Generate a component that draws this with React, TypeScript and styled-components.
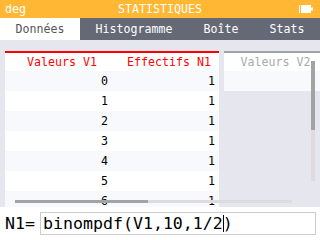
import styled, { createGlobalStyle } from 'styled-components';

const GlobalStyle = createGlobalStyle`
  html, body {
    margin: 0;
    padding: 0;
    background: #ffffff;
  }
`;

const mono = `"DejaVu Sans Mono", "Liberation Mono", monospace`;

const Screen = styled.div`
  width: 320px;
  height: 240px;
  display: flex;
  flex-direction: column;
  overflow: hidden;
  font-family: ${mono};
`;

const TitleBar = styled.div`
  height: 18px;
  background: #ffb734;
  color: #ffffff;
  display: grid;
  grid-template-columns: 1fr auto 1fr;
  align-items: center;
  padding: 0 5px;
  font-size: 11.6px;
  line-height: 18px;
`;

const TitleRight = styled.div`
  display: flex;
  justify-content: flex-end;
  align-items: center;
  padding-right: 1px;
`;

const TabBar = styled.div`
  height: 22px;
  display: flex;
  background: #656975;
`;

const Tab = styled.div<{ $active?: boolean }>`
  flex: 1 1 auto;
  display: flex;
  align-items: center;
  justify-content: center;
  font-size: 11.6px;
  background: ${(p) => (p.$active ? '#ffffff' : 'transparent')};
  color: ${(p) => (p.$active ? '#555555' : '#ffffff')};
`;

const Content = styled.div`
  position: relative;
  flex: 1;
  background: #e6e6ee;
  padding: 11px 0 0 5px;
  display: flex;
  gap: 5px;
  overflow: hidden;
`;

const Group = styled.div<{ $accent: string }>`
  display: flex;
  border-top: 2px solid ${(p) => p.$accent};
  align-self: flex-start;
`;

const Column = styled.div<{ $width: number }>`
  width: ${(p) => p.$width}px;
  flex: none;
  display: flex;
  flex-direction: column;
`;

const HeaderCell = styled.div<{ $color: string; $shift: number }>`
  height: 18px;
  background: #ffffff;
  color: ${(p) => p.$color};
  font-size: 11.6px;
  display: flex;
  align-items: center;
  justify-content: center;
  padding-left: ${(p) => p.$shift}px;
`;

const Cell = styled.div<{ $stripe: boolean }>`
  height: 20px;
  background: ${(p) => (p.$stripe ? '#f7f9fd' : '#ffffff')};
  color: #000000;
  font-size: 11.6px;
  display: flex;
  align-items: center;
  justify-content: flex-end;
  padding-right: 4px;
`;

const HScroll = styled.div`
  position: absolute;
  left: 15px;
  top: 160px;
  width: 277px;
  height: 3px;
  background: #dedadd;
`;

const VScroll = styled.div`
  position: absolute;
  left: 311px;
  top: 21px;
  width: 4px;
  height: 120px;
  background: #dedadd;
`;

const Thumb = styled.div<{ $vertical?: boolean; $size: number }>`
  background: #a3a3a3;
  width: ${(p) => (p.$vertical ? '100%' : `${p.$size}px`)};
  height: ${(p) => (p.$vertical ? `${p.$size}px` : '100%')};
`;

const EditBar = styled.div`
  height: 33px;
  flex: none;
  background: #ffffff;
  display: flex;
  align-items: center;
  padding-left: 5px;
  font-size: 16.6px;
  color: #000000;
`;

const Label = styled.span`
  width: 35px;
  flex: none;
`;

const InputBox = styled.div`
  width: 272px;
  height: 21px;
  border: 1px solid #cccccc;
  padding-left: 2px;
  display: flex;
  align-items: center;
`;

const Caret = styled.span`
  display: inline-block;
  width: 1px;
  height: 17px;
  background: #000000;
  margin: 0 -1px 0 0;
`;

const values = [0, 1, 2, 3, 4, 5, 6];

function Battery() {
  return (
    <svg width="15" height="9" viewBox="0 0 15 9">
      <rect x="0" y="0" width="1" height="8" fill="#ffffff" />
      <rect x="2" y="0" width="10" height="8" fill="#ffffff" />
      <rect x="12" y="2.5" width="2" height="3" fill="#ffffff" />
    </svg>
  );
}

export default function App() {
  return (
    <Screen>
      <GlobalStyle />
      <TitleBar>
        <span>deg</span>
        <span>STATISTIQUES</span>
        <TitleRight>
          <Battery />
        </TitleRight>
      </TitleBar>
      <TabBar>
        <Tab $active>Données</Tab>
        <Tab>Histogramme</Tab>
        <Tab>Boîte</Tab>
        <Tab>Stats</Tab>
      </TabBar>
      <Content>
        <Group $accent="#ff0000">
          <Column $width={107}>
            <HeaderCell $color="#ff0000" $shift={7}>Valeurs V1</HeaderCell>
            {values.map((v, i) => (
              <Cell key={v} $stripe={i % 2 === 0}>
                {v}
              </Cell>
            ))}
          </Column>
          <Column $width={107}>
            <HeaderCell $color="#ff0000" $shift={7}>Effectifs N1</HeaderCell>
            {values.map((v, i) => (
              <Cell key={v} $stripe={i % 2 === 0}>
                1
              </Cell>
            ))}
          </Column>
        </Group>
        <Group $accent="#a3a3a3">
          <Column $width={103}>
            <HeaderCell $color="#a8a8a8" $shift={0}>Valeurs V2</HeaderCell>
            <Cell $stripe />
          </Column>
        </Group>
        <HScroll>
          <Thumb $size={133} />
        </HScroll>
        <VScroll>
          <Thumb $vertical $size={69} />
        </VScroll>
      </Content>
      <EditBar>
        <Label>N1=</Label>
        <InputBox>
          binompdf(V1,10,1/2
          <Caret />)
        </InputBox>
      </EditBar>
    </Screen>
  );
}
